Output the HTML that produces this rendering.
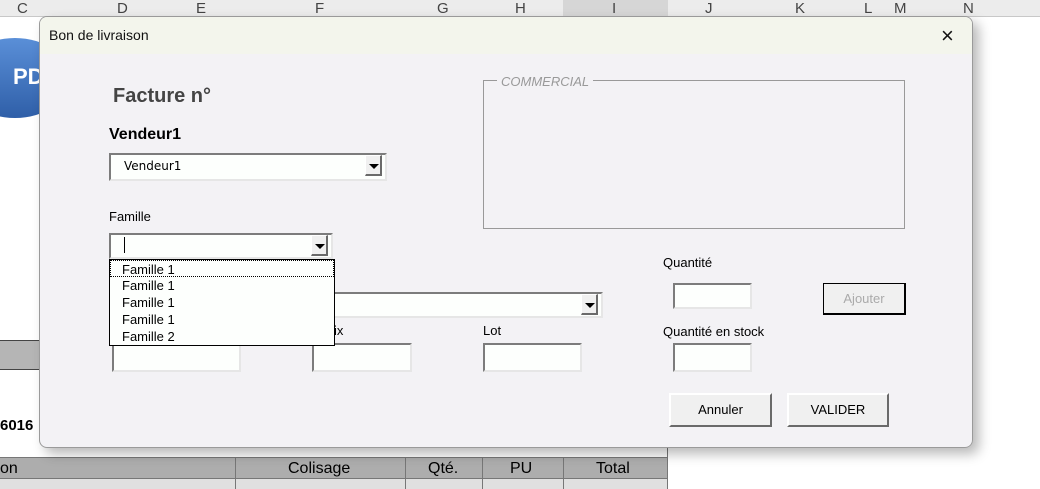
<!DOCTYPE html>
<html><head><meta charset="utf-8"><style>
*{margin:0;padding:0;box-sizing:border-box}
body{width:1040px;height:489px;overflow:hidden;background:#fff;font-family:"Liberation Sans",sans-serif;position:relative;font-size:13px;color:#000}
.a{position:absolute}
.colh{top:0;height:17px;background:#ececec;border-bottom:1px solid #c8c8c8;color:#444;font-size:15px;line-height:17px;text-align:center}
.in{position:absolute;background:#fdfffd;border-top:2px solid #7c7c7c;border-left:2px solid #7c7c7c;border-right:2px solid #e6e6e6;border-bottom:2px solid #e6e6e6}
.dd{position:absolute;width:17px;height:21px;background:#f0f0f0;border-right:2px solid #6a6a6a;border-bottom:2px solid #6a6a6a;border-left:1px solid #fff;border-top:1px solid #fff}
.dd:after{content:"";position:absolute;left:3px;top:8px;border-left:5px solid transparent;border-right:5px solid transparent;border-top:5px solid #000}
.btn{position:absolute;background:#f0f0f0;border-top:2px solid #fff;border-left:2px solid #fff;border-right:2px solid #6a6a6a;border-bottom:2px solid #6a6a6a;text-align:center;font-size:13px}
</style></head><body>
<div class="a colh" style="left:0;width:1040px"></div>
<div class="a" style="left:17px;top:0;color:#444;font-size:15px">C</div>
<div class="a" style="left:117px;top:0;color:#444;font-size:15px">D</div>
<div class="a" style="left:196px;top:0;color:#444;font-size:15px">E</div>
<div class="a" style="left:315px;top:0;color:#444;font-size:15px">F</div>
<div class="a" style="left:437px;top:0;color:#444;font-size:15px">G</div>
<div class="a" style="left:515px;top:0;color:#444;font-size:15px">H</div>
<div class="a" style="left:563px;top:0;width:105px;height:17px;background:#d6d6d6"></div>
<div class="a" style="left:612px;top:0;color:#444;font-size:15px">I</div>
<div class="a" style="left:705px;top:0;color:#444;font-size:15px">J</div>
<div class="a" style="left:795px;top:0;color:#444;font-size:15px">K</div>
<div class="a" style="left:864px;top:0;color:#444;font-size:15px">L</div>
<div class="a" style="left:894px;top:0;color:#444;font-size:15px">M</div>
<div class="a" style="left:963px;top:0;color:#444;font-size:15px">N</div>
<!-- PDF button -->
<div class="a" style="left:-40px;top:38px;width:110px;height:80px;border-radius:55px/40px;background:linear-gradient(#5a8fd8,#2f5fa8)"></div>
<div class="a" style="left:13px;top:64px;color:#fff;font-weight:bold;font-size:22px">PD</div>
<!-- left sheet bits -->
<div class="a" style="left:0;top:340px;width:40px;height:30px;background:#b5b5b5;border-top:1px solid #444;border-bottom:1px solid #444"></div>
<div class="a" style="left:0;top:417px;font-weight:bold;font-size:15px">6016</div>
<!-- bottom table -->
<div class="a" style="left:0;top:457px;width:667px;height:22px;background:#adadad;border-top:1px solid #777;border-bottom:1px solid #777"></div>
<div class="a" style="left:0;top:479px;width:667px;height:10px;background:#e0e0e0"></div>
<div class="a" style="left:235px;top:457px;width:1px;height:32px;background:#777"></div>
<div class="a" style="left:405px;top:457px;width:1px;height:32px;background:#777"></div>
<div class="a" style="left:482px;top:457px;width:1px;height:32px;background:#777"></div>
<div class="a" style="left:563px;top:457px;width:1px;height:32px;background:#777"></div>
<div class="a" style="left:667px;top:448px;width:1px;height:41px;background:#777"></div>
<div class="a" style="left:0;top:460px;font-size:16px">on</div>
<div class="a" style="left:288px;top:460px;font-size:16px">Colisage</div>
<div class="a" style="left:428px;top:460px;font-size:16px">Qté.</div>
<div class="a" style="left:510px;top:460px;font-size:16px">PU</div>
<div class="a" style="left:596px;top:460px;font-size:16px">Total</div>
<!-- shadow -->
<div class="a" style="left:39px;top:16px;width:934px;height:432px;border-radius:8px;box-shadow:6px 6px 12px rgba(0,0,0,.28)"></div>
<!-- dialog -->
<div class="a" style="left:39px;top:16px;width:934px;height:432px;background:#f3f2f5;border:1px solid #9a9a9a;border-radius:8px;overflow:hidden">
 <div class="a" style="left:0;top:0;width:934px;height:37px;background:#f3f5ec"></div>
 <div class="a" style="left:9px;top:10px;font-size:14px;color:#111">Bon de livraison</div>
 <div class="a" style="left:901px;top:6px;font-size:22px;font-weight:300;color:#111">×</div>
</div>
<div class="a" style="left:113px;top:85px;font-size:20px;font-weight:bold;color:#444">Facture n°</div>
<div class="a" style="left:109px;top:126px;font-size:16px;font-weight:bold">Vendeur1</div>
<div class="in" style="left:109px;top:153px;width:278px;height:28px"></div>
<div class="a" style="left:124px;top:159px;font-size:12px;font-family:'DejaVu Sans',sans-serif">Vendeur1</div>
<div class="dd" style="left:365px;top:155px"></div>
<div class="a" style="left:109px;top:209px;font-size:13px">Famille</div>
<div class="in" style="left:109px;top:233px;width:224px;height:26px"></div>
<div class="a" style="left:124px;top:237px;width:1px;height:16px;background:#000"></div>
<div class="dd" style="left:311px;top:235px"></div>
<!-- fieldset -->
<div class="a" style="left:483px;top:80px;width:422px;height:149px;border:1px solid #999"></div>
<div class="a" style="left:497px;top:74px;padding:0 4px;background:#f3f2f5;color:#999;font-style:italic;font-size:13px">COMMERCIAL</div>
<!-- product combobox -->
<div class="in" style="left:320px;top:292px;width:283px;height:26px"></div>
<div class="dd" style="left:581px;top:294px"></div>
<div class="a" style="left:334px;top:323px">ix</div>
<div class="a" style="left:483px;top:323px">Lot</div>
<div class="in" style="left:112px;top:343px;width:129px;height:29px"></div>
<div class="in" style="left:312px;top:343px;width:100px;height:29px"></div>
<div class="in" style="left:483px;top:343px;width:99px;height:29px"></div>
<!-- dropdown list -->
<div class="a" style="left:109px;top:259px;width:226px;height:87px;background:#fdfffd;border:1px solid #000;font-size:13px;line-height:17px">
 <div style="height:17px;border:1px dotted #000;padding-left:11px">Famille 1</div>
 <div style="padding-left:12px">Famille 1</div>
 <div style="padding-left:12px">Famille 1</div>
 <div style="padding-left:12px">Famille 1</div>
 <div style="padding-left:12px">Famille 2</div>
</div>
<div class="a" style="left:663px;top:255px">Quantité</div>
<div class="in" style="left:673px;top:283px;width:79px;height:26px"></div>
<div class="a" style="left:823px;top:283px;width:83px;height:32px;border:1px solid #000;background:#f0f0f0;border-right:2px solid #000;border-bottom:2px solid #000;color:#aaa;text-align:center;line-height:30px">Ajouter</div>
<div class="a" style="left:663px;top:324px">Quantité en stock</div>
<div class="in" style="left:673px;top:343px;width:79px;height:29px"></div>
<div class="btn" style="left:669px;top:393px;width:103px;height:34px;line-height:30px">Annuler</div>
<div class="btn" style="left:787px;top:393px;width:102px;height:34px;line-height:30px">VALIDER</div>
</body></html>
